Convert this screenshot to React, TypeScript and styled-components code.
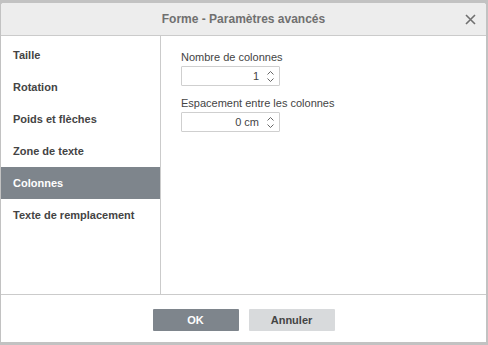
import React, {useState} from 'react';
import styled, {createGlobalStyle} from 'styled-components';

const GlobalStyle = createGlobalStyle`
  html, body {
    margin: 0;
    padding: 0;
    background: #c2c2c2;
  }
  body {
    font-family: Arial, "Liberation Sans", sans-serif;
  }
`;

const Page = styled.div`
  box-sizing: border-box;
  width: 488px;
  height: 345px;
  padding: 3px 2px 3px 1px;
`;

const Dialog = styled.div`
  box-sizing: border-box;
  height: 100%;
  background: #fff;
  display: grid;
  grid-template-rows: 33px 1fr 47px;
  border-radius: 3px 3px 0 0;
  overflow: hidden;
`;

const Header = styled.div`
  position: relative;
  background: #ededed;
  border-bottom: 1px solid #cbcbcb;
  display: flex;
  align-items: center;
  justify-content: center;
  font-size: 12px;
  font-weight: bold;
  color: #707070;
`;

const CloseButton = styled.button`
  position: absolute;
  right: 8px;
  top: 8px;
  width: 16px;
  height: 16px;
  padding: 0;
  border: none;
  background: none;
  display: flex;
  align-items: center;
  justify-content: center;
`;

const Body = styled.div`
  display: grid;
  grid-template-columns: 160px 1fr;
  border-bottom: 1px solid #cbcbcb;
  min-height: 0;
`;

const Sidebar = styled.div`
  border-right: 1px solid #cbcbcb;
  padding-top: 3px;
  display: flex;
  flex-direction: column;
`;

const MenuItem = styled.div<{$active?: boolean}>`
  height: 32px;
  display: flex;
  align-items: center;
  padding-left: 12px;
  font-size: 11px;
  font-weight: bold;
  color: ${(p) => (p.$active ? '#fff' : '#444')};
  background: ${(p) => (p.$active ? '#7e858c' : 'transparent')};
`;

const Content = styled.div`
  padding: 14px 20px;
  display: flex;
  flex-direction: column;
`;

const Field = styled.div`
  display: flex;
  flex-direction: column;
  margin-bottom: 10px;
`;

const Label = styled.div`
  font-size: 11px;
  color: #444;
  line-height: 14px;
  margin-bottom: 2px;
`;

const SpinBox = styled.div`
  box-sizing: border-box;
  width: 99px;
  height: 20px;
  border: 1px solid #cfcfcf;
  border-radius: 1px;
  display: flex;
  align-items: center;
`;

const SpinValue = styled.div`
  flex: 1;
  text-align: right;
  font-size: 11px;
  color: #444;
  padding-right: 5px;
`;

const SpinArrows = styled.div`
  width: 12px;
  height: 100%;
  display: flex;
  flex-direction: column;
  align-items: center;
  justify-content: center;
  gap: 3px;
  margin-right: 3px;
`;

const Footer = styled.div`
  display: flex;
  justify-content: center;
  align-items: flex-start;
  padding-top: 14px;
  gap: 10px;
`;

const Button = styled.button<{$primary?: boolean}>`
  width: 86px;
  height: 22px;
  border: none;
  border-radius: 1px;
  font-family: Arial, "Liberation Sans", sans-serif;
  font-size: 11px;
  font-weight: bold;
  color: ${(p) => (p.$primary ? '#fff' : '#444')};
  background: ${(p) => (p.$primary ? '#7e858c' : '#d8dadc')};
`;

const Chevron = ({up}: {up?: boolean}) => (
  <svg width="7" height="4" viewBox="0 0 7 4">
    <path
      d={up ? 'M0.5 3.5 L3.5 0.5 L6.5 3.5' : 'M0.5 0.5 L3.5 3.5 L6.5 0.5'}
      fill="none"
      stroke="#555"
      strokeWidth="0.9"
    />
  </svg>
);

const Spinner = ({value}: {value: string}) => (
  <SpinBox>
    <SpinValue>{value}</SpinValue>
    <SpinArrows>
      <Chevron up />
      <Chevron />
    </SpinArrows>
  </SpinBox>
);

const tabs = [
  'Taille',
  'Rotation',
  'Poids et flèches',
  'Zone de texte',
  'Colonnes',
  'Texte de remplacement',
];

const App = () => {
  const [active, setActive] = useState('Colonnes');

  return (
    <Page>
      <GlobalStyle />
      <Dialog>
        <Header>
          Forme - Paramètres avancés
          <CloseButton>
            <svg width="11" height="11" viewBox="0 0 11 11">
              <path d="M1 1 L10 10 M10 1 L1 10" stroke="#707070" strokeWidth="1.6" />
            </svg>
          </CloseButton>
        </Header>
        <Body>
          <Sidebar>
            {tabs.map((t) => (
              <MenuItem key={t} $active={t === active} onClick={() => setActive(t)}>
                {t}
              </MenuItem>
            ))}
          </Sidebar>
          <Content>
            <Field>
              <Label>Nombre de colonnes</Label>
              <Spinner value="1" />
            </Field>
            <Field>
              <Label>Espacement entre les colonnes</Label>
              <Spinner value="0 cm" />
            </Field>
          </Content>
        </Body>
        <Footer>
          <Button $primary>OK</Button>
          <Button>Annuler</Button>
        </Footer>
      </Dialog>
    </Page>
  );
};

export default App;
